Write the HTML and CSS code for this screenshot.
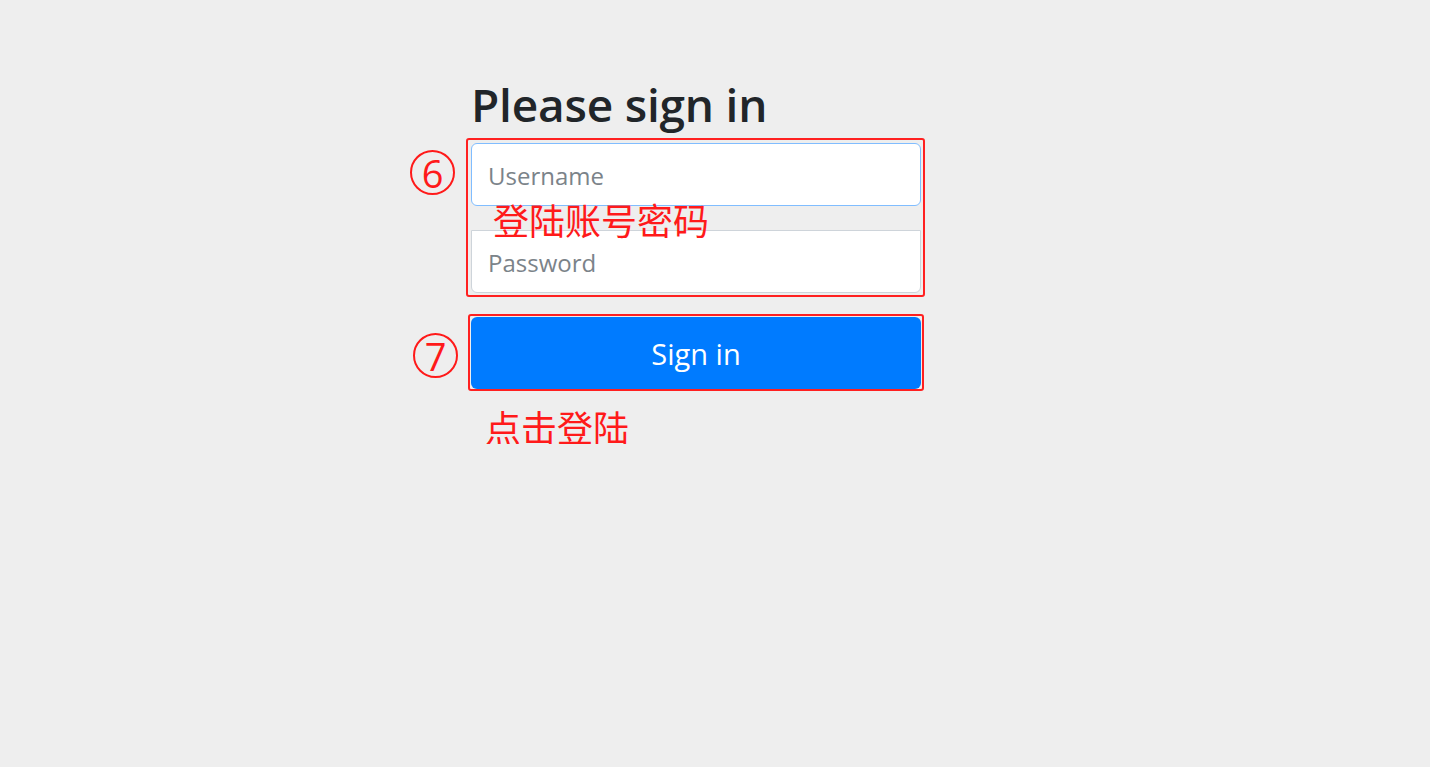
FILE: index.html
```html
<!DOCTYPE html>
<html lang="en">
<head>
    <meta charset="UTF-8">
    <meta name="viewport" content="width=device-width, initial-scale=1.0">
    <title>Please sign in</title>
    <link rel="stylesheet" href="styles.css">
</head>
<body>
    <div class="container">
        <form class="form-signin">
            <h2 class="form-signin-heading">Please sign in</h2>

            <div class="mark-box mark-fields">
                <span class="mark-num mark-num-6">6</span>
                <input type="text" class="form-control input-focus" placeholder="Username">
                <input type="password" class="form-control input-second" placeholder="Password">
                <span class="mark-text mark-text-fields">登陆账号密码</span>
            </div>

            <div class="mark-box mark-button">
                <span class="mark-num mark-num-7">7</span>
                <button type="button" class="btn-primary">Sign in</button>
            </div>

            <p class="mark-text mark-text-button">点击登陆</p>
        </form>
    </div>
</body>
</html>
```

FILE: styles.css
```css
body {
    margin: 0;
    padding: 0;
    background-color: #eeeeee;
    font-family: "Open Sans", "Noto Sans", sans-serif;
    color: #212529;
}

.container {
    width: 450px;
    margin-left: 471px;
    padding-top: 77px;
}

.form-signin-heading {
    margin: 0 0 7px 0;
    font-size: 46px;
    font-weight: 600;
    line-height: 54px;
    letter-spacing: -0.2px;
}

.mark-box {
    position: relative;
    border: 2px solid #ff2020;
    border-radius: 3px;
}

.mark-fields {
    margin: 0 -4px 0 -5px;
    padding: 3px 2px 2px 3px;
}

.mark-button {
    margin: 17px -3px 0 -3px;
    padding: 1px 1px 0 1px;
}

.form-control {
    display: block;
    box-sizing: border-box;
    width: 100%;
    height: 63px;
    padding: 2px 16px 0 16px;
    font-family: inherit;
    font-size: 24px;
    color: #495057;
    background-color: #fff;
    border: 1px solid #ced4da;
    border-radius: 6px;
    outline: none;
}

.form-control::placeholder {
    color: #7b8389;
}

.input-focus {
    border-color: #80bdff;
}

.input-second {
    margin-top: 24px;
    border-top-left-radius: 0;
    border-top-right-radius: 0;
}

.btn-primary {
    display: block;
    width: 100%;
    height: 72px;
    font-family: inherit;
    font-size: 29px;
    color: #fff;
    background-color: #007bff;
    border: none;
    border-radius: 6px;
    cursor: pointer;
}

.mark-num {
    position: absolute;
    display: flex;
    align-items: center;
    justify-content: center;
    box-sizing: border-box;
    width: 45px;
    height: 45px;
    border: 2.5px solid #ff1a1a;
    border-radius: 50%;
    font-family: "Open Sans", "Noto Sans", sans-serif;
    font-size: 38px;
    line-height: 1;
    color: #ff1a1a;
}

.mark-num-6 {
    left: -58px;
    top: 10px;
}

.mark-num-7 {
    left: -57px;
    top: 17px;
}

.mark-text {
    font-family: "Noto Sans CJK SC", sans-serif;
    font-size: 36px;
    line-height: 1;
    color: #ff1a1a;
}

.mark-text-fields {
    position: absolute;
    left: 25px;
    top: 61px;
}

.mark-text-button {
    margin: 17px 0 0 14px;
}
```
